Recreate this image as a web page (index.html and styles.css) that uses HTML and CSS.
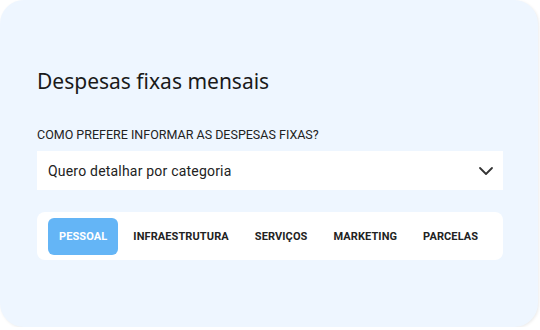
FILE: index.html
```html
<!DOCTYPE html>
<html lang="pt-BR">
<head>
    <meta charset="UTF-8">
    <meta name="viewport" content="width=device-width, initial-scale=1.0">
    <title>Despesas fixas mensais</title>
    <link rel="stylesheet" href="styles.css">
</head>
<body>
    <div class="card">
        <h2 class="title">Despesas fixas mensais</h2>

        <label class="label" for="modo">Como prefere informar as despesas fixas?</label>
        <div class="select" id="modo">
            <span>Quero detalhar por categoria</span>
            <svg class="chevron" width="16" height="16" viewBox="0 0 16 16">
                <path d="M2 5 L8 11 L14 5" fill="none" stroke="#333" stroke-width="1.8" stroke-linecap="round" stroke-linejoin="round"/>
            </svg>
        </div>

        <div class="tabs">
            <div class="tab active">Pessoal</div>
            <div class="tab">Infraestrutura</div>
            <div class="tab">Serviços</div>
            <div class="tab">Marketing</div>
            <div class="tab">Parcelas</div>
        </div>
    </div>
</body>
</html>
```

FILE: styles.css
```css
body {
    margin: 0;
    background: #ffffff;
    font-family: Roboto, "Noto Sans", sans-serif;
}
.card {
    width: 538px;
    height: 327px;
    box-sizing: border-box;
    padding: 67px 35px 0 37px;
    background: #eef6ff;
    border-radius: 24px;
    box-shadow: 1px 1px 3px rgba(0, 0, 0, 0.08);
}
.title {
    margin: 0 0 32px;
    font-family: "Noto Sans", sans-serif;
    font-size: 21px;
    font-weight: 400;
    color: #1a1a1a;
    line-height: 28px;
}
.label {
    display: block;
    font-size: 12.5px;
    text-transform: uppercase;
    color: #222;
    line-height: 16px;
    margin-bottom: 8px;
}
.select {
    display: flex;
    align-items: center;
    justify-content: space-between;
    height: 39px;
    padding: 0 9px 0 11px;
    background: #fff;
    font-size: 14px;
    color: #222;
    letter-spacing: 0.2px;
}
.chevron {
    display: block;
}
.tabs {
    display: flex;
    align-items: center;
    gap: 4px;
    margin-top: 22px;
    height: 48px;
    padding: 0 11px;
    background: #fff;
    border-radius: 8px;
}
.tab {
    padding: 0 11px;
    height: 37px;
    line-height: 37px;
    font-size: 11px;
    font-weight: 700;
    letter-spacing: 0.1px;
    text-transform: uppercase;
    color: #222;
    border-radius: 6px;
}
.tab.active {
    background: #64b5f6;
    color: #fff;
}
```
